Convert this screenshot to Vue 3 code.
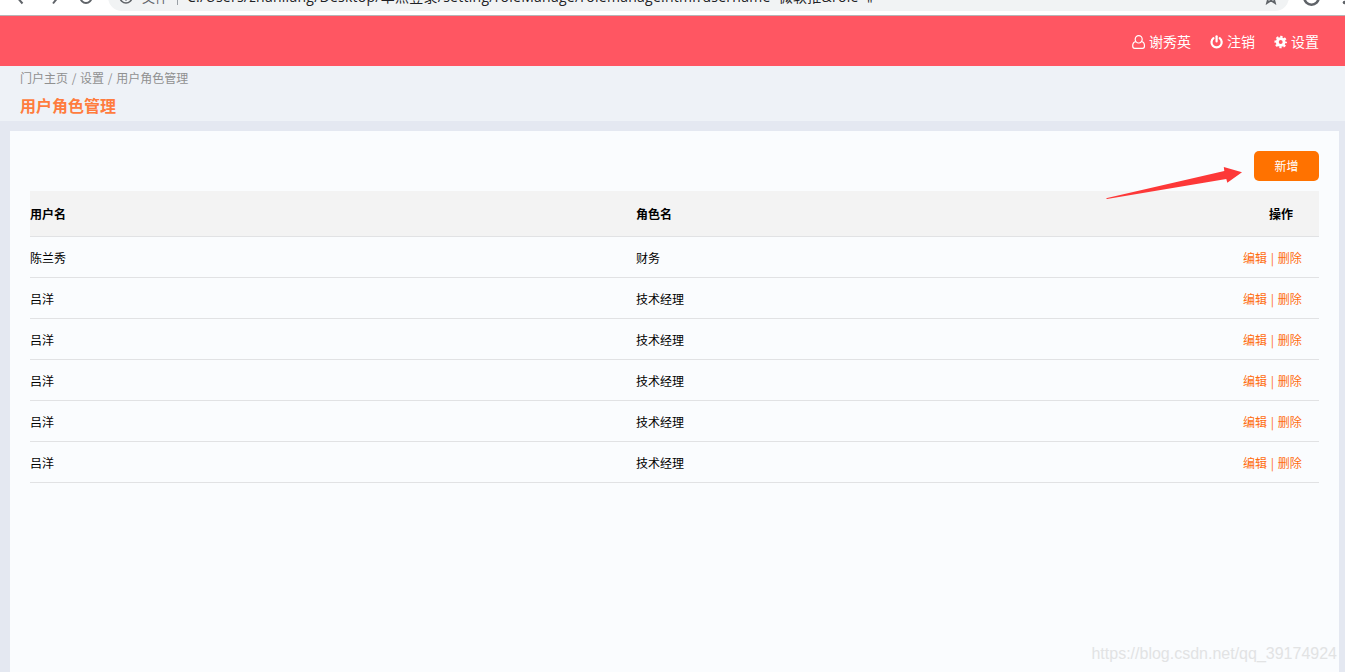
<template>
  <div class="page">
    <!-- Browser toolbar -->
    <div class="browser-bar">
      <svg class="nav-icons" width="108" height="15" viewBox="0 0 108 15" fill="none" stroke="#5f6368" stroke-width="2">
        <path d="M16 -4 L22.500 3.500" />
        <path d="M59 -4 L53 3.500" />
        <circle cx="86" cy="-2.500" r="5.500" />
      </svg>
      <div class="address">
        <svg class="info-icon" width="14" height="14" viewBox="0 0 14 14" fill="none" stroke="#5f6368">
          <circle cx="7" cy="7" r="6" stroke-width="1.600" />
          <path d="M7 6 V10.500" stroke-width="2" />
        </svg>
        <span class="scheme">文件</span>
        <span class="bar-line"></span>
        <span class="url">C:/Users/zhanliang/Desktop/单点登录/setting/roleManage/rolemanage.html?username=微软推&amp;role=<span class="url-end">"</span></span>
        <svg class="star" width="16" height="16" viewBox="0 0 24 24" fill="none" stroke="#5f6368" stroke-width="2.600">
          <path d="M12 3 L14.600 9.500 L21.500 10 L16.200 14.500 L18 21 L12 17.300 L6 21 L7.800 14.500 L2.500 10 L9.400 9.500 Z" />
        </svg>
      </div>
      <svg class="bar-end" width="56" height="15" viewBox="0 0 56 15" fill="none">
        <circle cx="22.500" cy="-2.500" r="7.200" stroke="#5f6368" stroke-width="2.600" />
        <circle cx="55.500" cy="2.500" r="1.800" fill="#5f6368" />
      </svg>
    </div>

    <header class="top-bar">
      <a class="top-link">
        <svg width="14" height="14" viewBox="0 0 14 14" fill="none" stroke="#fff" stroke-width="1.200">
          <ellipse cx="6.700" cy="4.300" rx="3.500" ry="3.700" />
          <path d="M3.900 6.700 C1.700 7 0.700 8.800 0.700 11 C0.700 12.700 1.400 13.400 2.700 13.400 H10.500 C11.800 13.400 12.500 12.700 12.500 11 C12.500 8.800 11.700 7 9.500 6.700" />
        </svg>
        <span>谢秀英</span>
      </a>
      <a class="top-link">
        <svg width="14" height="14" viewBox="0 0 14 14" fill="none" stroke="#fff" stroke-width="2.200" stroke-linecap="round">
          <path d="M3.500 3.200 A5.100 5.100 0 1 0 9.700 3.200" />
          <path d="M6.600 1.300 V6.500" />
        </svg>
        <span>注销</span>
      </a>
      <a class="top-link">
        <svg width="14" height="14" viewBox="0 0 14 14" fill="none" stroke="#fff">
          <circle cx="6.700" cy="7" r="3.400" stroke-width="2.900" />
          <circle cx="6.700" cy="7" r="5.300" stroke-width="1.900" stroke-dasharray="2.300 1.863" stroke-dashoffset="1.150" />
        </svg>
        <span>设置</span>
      </a>
    </header>

    <div class="title-bar">
      <div class="breadcrumb">门户主页 / 设置 / 用户角色管理</div>
      <h1>用户角色管理</h1>
    </div>

    <main class="panel">
      <div class="toolbar">
        <button class="add-btn">新增</button>
      </div>
      <table>
        <thead>
          <tr>
            <th class="col-user">用户名</th>
            <th class="col-role">角色名</th>
            <th class="col-action">操作</th>
          </tr>
        </thead>
        <tbody>
          <tr v-for="(item, index) in roles" :key="index">
            <td>{{ item.user }}</td>
            <td>{{ item.role }}</td>
            <td class="actions"><a>编辑</a> | <a>删除</a></td>
          </tr>
        </tbody>
      </table>
    </main>

    <!-- Arrow pointing at the add button -->
    <svg class="arrow" width="140" height="36" viewBox="0 0 140 36">
      <path d="M4 33.300 L122.300 6 L121.800 2 L140 7.200 L125.300 17.800 L124.300 14 L5 34 Z" fill="#fd3838" />
    </svg>
    <div class="watermark">https://blog.csdn.net/qq_39174924</div>
  </div>
</template>

<script setup>
import { ref } from 'vue'

const roles = ref([
  { user: '陈兰秀', role: '财务' },
  { user: '吕洋', role: '技术经理' },
  { user: '吕洋', role: '技术经理' },
  { user: '吕洋', role: '技术经理' },
  { user: '吕洋', role: '技术经理' },
  { user: '吕洋', role: '技术经理' }
])
</script>

<style>
body {
  margin: 0;
  overflow: hidden;
}
</style>

<style scoped>
.page {
  position: relative;
  display: flex;
  flex-direction: column;
  width: 1345px;
  height: 672px;
  overflow: hidden;
  background: #e4e8f1;
  font-family: "Noto Sans CJK SC", sans-serif;
  font-size: 12px;
  color: #000;
}

svg {
  display: block;
  flex: none;
}

.browser-bar {
  display: flex;
  flex: none;
  height: 15px;
  overflow: hidden;
  background: #fff;
  border-bottom: 1px solid #b6b4b6;
}

.address {
  display: flex;
  align-items: center;
  box-sizing: border-box;
  width: 1182px;
  height: 28px;
  margin-top: -17px;
  padding: 0 10px 0 11px;
  border-radius: 14px;
  background: #f1f3f4;
  font-family: "Open Sans", "Noto Sans CJK SC", sans-serif;
  font-size: 14px;
  line-height: 20px;
  white-space: nowrap;
}

.info-icon {
  margin-right: 9px;
}

.scheme {
  width: 27px;
  font-size: 13px;
  color: #5f6368;
}

.bar-line {
  width: 1px;
  height: 16px;
  margin: 0 9px 0 8px;
  background: #9aa0a6;
}

.url {
  flex: 1;
  color: #202124;
  letter-spacing: 0.26px;
}

.url-end {
  position: relative;
  top: 7px;
}

.top-bar {
  display: flex;
  flex: none;
  align-items: center;
  justify-content: flex-end;
  box-sizing: border-box;
  height: 50px;
  padding: 2px 26px 0 0;
  background: #ff5662;
}

.top-link {
  display: flex;
  align-items: center;
  gap: 3px;
  margin-left: 19px;
  font-size: 14px;
  line-height: 20px;
  color: #fff;
}

.top-link span {
  margin-bottom: 2px;
}

.title-bar {
  flex: none;
  box-sizing: border-box;
  height: 55px;
  padding: 3px 20px 0;
  background: #eef2f7;
}

.breadcrumb {
  line-height: 18px;
  color: #909090;
  word-spacing: 1px;
}

h1 {
  margin: 6px 0 0;
  font-size: 16px;
  font-weight: 700;
  line-height: 24px;
  color: #ff7c3e;
}

.panel {
  flex: 1;
  margin: 10px 6px 0 10px;
  padding: 20px 20px 0;
  background: #fafcfe;
}

.toolbar {
  display: flex;
  justify-content: flex-end;
  margin-bottom: 10px;
}

.add-btn {
  width: 65px;
  height: 30px;
  padding: 0 0 2px;
  border: none;
  border-radius: 5px;
  background: #ff7200;
  color: #fff;
  font-family: inherit;
  font-size: 12px;
}

table {
  width: 100%;
  border-collapse: separate;
  border-spacing: 0;
  table-layout: fixed;
}

th,
td {
  box-sizing: border-box;
  height: 41px;
  padding: 1px 0 0;
  border-bottom: 1px solid #e1e2e4;
  line-height: 18px;
  text-align: left;
}

th {
  height: 46px;
  background: #f3f3f3;
  font-weight: 700;
}

.col-user {
  width: 606px;
}

.col-action {
  width: 76px;
  text-align: center;
}

td.actions {
  color: #ff6d10;
  white-space: nowrap;
  word-spacing: 1px;
}

.arrow {
  position: absolute;
  top: 165px;
  left: 1102px;
}

.watermark {
  position: absolute;
  right: 8px;
  bottom: 8px;
  font-family: "Liberation Sans", Arial, sans-serif;
  font-size: 16px;
  line-height: 20px;
  color: #e2e3e4;
}
</style>
